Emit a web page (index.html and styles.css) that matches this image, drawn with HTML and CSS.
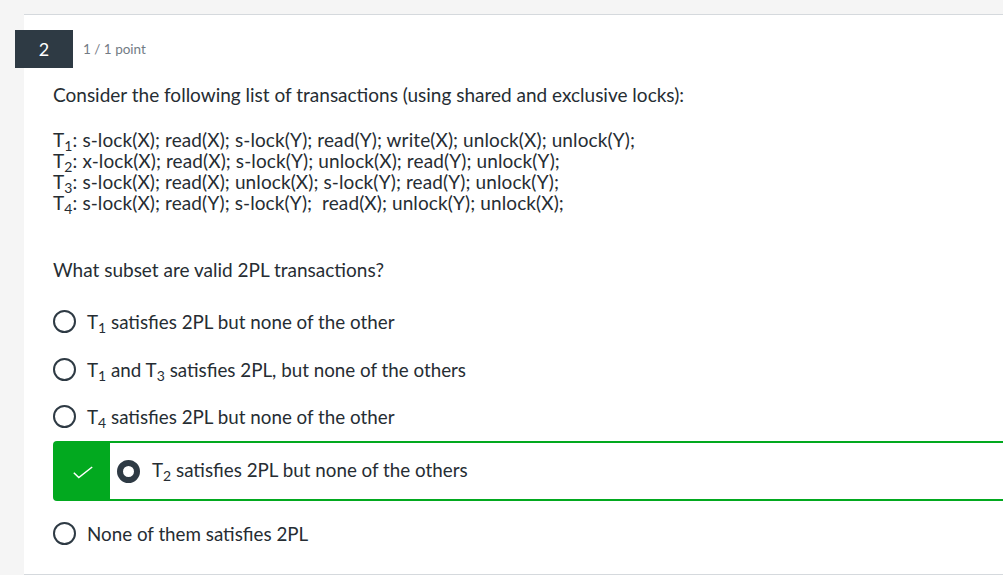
FILE: index.html
```html
<!DOCTYPE html>
<html>
<head>
<meta charset="utf-8">
<link rel="stylesheet" href="styles.css">
</head>
<body>
<div class="page">
  <div class="card">
    <div class="header">
      <div class="badge">2</div>
      <div class="points">1 / 1 point</div>
    </div>
    <div class="content">
      <p class="prompt">Consider the following list of transactions (using shared and exclusive locks):</p>
      <div class="txs">
        <div class="tx">T<sub>1</sub>: s-lock(X); read(X); s-lock(Y); read(Y); write(X); unlock(X); unlock(Y);</div>
        <div class="tx">T<sub>2</sub>: x-lock(X); read(X); s-lock(Y); unlock(X); read(Y); unlock(Y);</div>
        <div class="tx">T<sub>3</sub>: s-lock(X); read(X); unlock(X); s-lock(Y); read(Y); unlock(Y);</div>
        <div class="tx">T<sub>4</sub>: s-lock(X); read(Y); s-lock(Y);&nbsp; read(X); unlock(Y); unlock(X);</div>
      </div>
      <p class="question">What subset are valid 2PL transactions?</p>
      <div class="options">
        <div class="option o1"><span class="radio"></span><span class="label">T<sub>1</sub> satisfies 2PL but none of the other</span></div>
        <div class="option o2"><span class="radio"></span><span class="label">T<sub>1</sub> and T<sub>3</sub> satisfies 2PL, but none of the others</span></div>
        <div class="option o3"><span class="radio"></span><span class="label">T<sub>4</sub> satisfies 2PL but none of the other</span></div>
        <div class="correct">
          <div class="check">
            <svg width="20" height="13" viewBox="0 0 20 13"><path d="M0.8 6.8 L5.8 11.6 L19.2 1" fill="none" stroke="#fff" stroke-width="1.5"/></svg>
          </div>
          <span class="radio selected"></span>
          <span class="label">T<sub>2</sub> satisfies 2PL but none of the others</span>
        </div>
        <div class="option o5"><span class="radio"></span><span class="label">None of them satisfies 2PL</span></div>
      </div>
    </div>
  </div>
</div>
</body>
</html>
```
FILE: styles.css
```css
html, body {
  margin: 0;
  padding: 0;
  background: #f5f5f5;
  overflow: hidden;
}
body {
  font-family: Lato, "Open Sans", sans-serif;
  color: #262d33;
}
.page {
  padding: 14px 0 0 24px;
  height: 575px;
  box-sizing: border-box;
}
.card {
  background: #fff;
  border-top: 1px solid #d5d9dd;
  border-bottom: 1px solid #d5d9dd;
  height: 561px;
  box-sizing: border-box;
  padding-top: 15px;
}
.header {
  display: flex;
  align-items: center;
  margin-left: -9px;
}
.badge {
  width: 58px;
  height: 38px;
  background: #2e3a44;
  color: #fff;
  font-size: 18px;
  display: flex;
  align-items: center;
  justify-content: center;
}
.points {
  margin-left: 10px;
  font-size: 13.5px;
  color: #737b84;
}
.content {
  padding-left: 29px;
  font-size: 19px;
}
p {
  margin: 0;
}
.prompt {
  line-height: 21px;
  margin-top: 16px;
}
.txs {
  margin-top: 24px;
  line-height: 21px;
  letter-spacing: 0.1px;
}
sub {
  font-size: 14px;
  vertical-align: -4px;
  line-height: 0;
}
.question {
  line-height: 21px;
  margin-top: 46px;
}
.options {
  display: flex;
  flex-direction: column;
  margin-top: 29px;
  font-size: 18.8px;
}
.option {
  display: flex;
  align-items: center;
  height: 24px;
}
.o2 { margin-top: 24px; }
.o3 { margin-top: 23px; }
.o5 { margin-top: 20px; }
.radio {
  width: 23px;
  height: 23px;
  box-sizing: border-box;
  border: 2px solid #2e3a44;
  border-radius: 50%;
  flex: none;
}
.option .label {
  margin-left: 11px;
}
.correct {
  margin-top: 13px;
  height: 60px;
  box-sizing: border-box;
  border: 2px solid #02a91f;
  border-right: none;
  border-radius: 4px 0 0 4px;
  display: flex;
  align-items: center;
}
.check {
  width: 55px;
  align-self: stretch;
  background: #02a91f;
  display: flex;
  align-items: center;
  justify-content: center;
  padding-top: 2px;
  box-sizing: border-box;
}
.radio.selected {
  margin-left: 7px;
  border: 6px solid #2e3a44;
}
.correct .label {
  margin-left: 12px;
  margin-top: -3px;
}
```
